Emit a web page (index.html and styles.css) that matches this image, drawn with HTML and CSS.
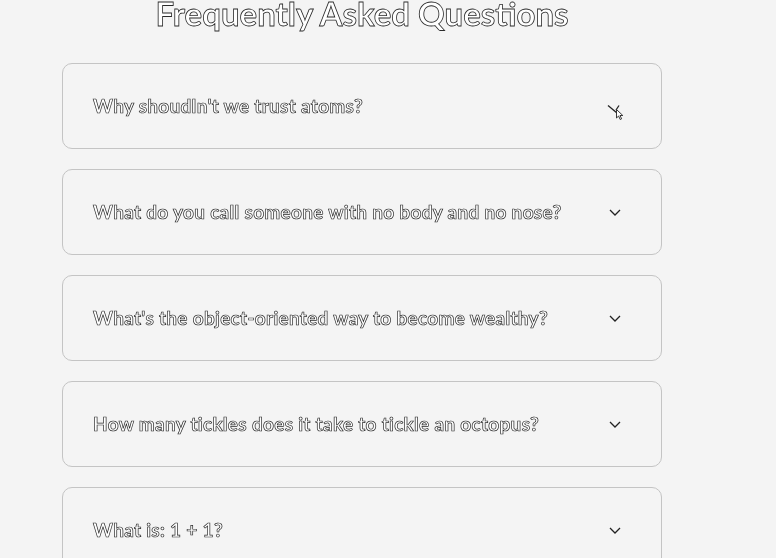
FILE: index.html
```html
<!DOCTYPE html>
<html lang="en">
<head>
<meta charset="utf-8">
<title>FAQ</title>
<link rel="stylesheet" href="styles.css">
</head>
<body>
<main class="faq">
  <h1 class="faq-title">Frequently Asked Questions</h1>
  <div class="faq-list">
    <div class="faq-item">
      <span class="faq-q">Why shoudln't we trust atoms?</span>
      <span class="faq-toggle">
        <svg width="30" height="30" viewBox="0 0 30 30">
          <path d="M8 14.5 L17 22" stroke="#222" stroke-width="1.3" fill="none"/>
          <path d="M16 19 L19 14.5" stroke="#222" stroke-width="1.3" fill="none"/>
          <path d="M16.5 18.5 L16.5 27 L18.6 25 L20.2 28.5 L21.6 27.8 L20 24.5 L22.8 24.5 Z" fill="#fff" stroke="#222" stroke-width="0.9"/>
        </svg>
      </span>
    </div>
    <div class="faq-item">
      <span class="faq-q">What do you call someone with no body and no nose?</span>
      <span class="faq-toggle"><svg width="30" height="30" viewBox="0 0 30 30"><path d="M10 13 L15 18 L20 13" stroke="#222" stroke-width="1.3" fill="none"/></svg></span>
    </div>
    <div class="faq-item">
      <span class="faq-q">What's the object-oriented way to become wealthy?</span>
      <span class="faq-toggle"><svg width="30" height="30" viewBox="0 0 30 30"><path d="M10 13 L15 18 L20 13" stroke="#222" stroke-width="1.3" fill="none"/></svg></span>
    </div>
    <div class="faq-item">
      <span class="faq-q">How many tickles does it take to tickle an octopus?</span>
      <span class="faq-toggle"><svg width="30" height="30" viewBox="0 0 30 30"><path d="M10 13 L15 18 L20 13" stroke="#222" stroke-width="1.3" fill="none"/></svg></span>
    </div>
    <div class="faq-item">
      <span class="faq-q">What is: 1 + 1?</span>
      <span class="faq-toggle"><svg width="30" height="30" viewBox="0 0 30 30"><path d="M10 13 L15 18 L20 13" stroke="#222" stroke-width="1.3" fill="none"/></svg></span>
    </div>
  </div>
</main>
</body>
</html>
```
FILE: styles.css
```css
html, body {
  margin: 0;
  padding: 0;
  background: #f4f4f4;
}
body {
  font-family: Lato, "Open Sans", sans-serif;
  overflow: hidden;
  height: 558px;
}
.faq {
  width: 600px;
  margin-left: 62px;
}
.faq-title {
  margin: -9px 0 0;
  font-size: 33px;
  font-weight: 700;
  line-height: 44px;
  text-align: center;
  color: #fff;
  -webkit-text-stroke: 0.8px #2a2a2a;
  letter-spacing: 0;
  will-change: transform;
}
.faq-list {
  display: flex;
  flex-direction: column;
  gap: 20px;
  margin-top: 28px;
}
.faq-item {
  box-sizing: border-box;
  height: 86px;
  border: 1px solid #c4c4c4;
  border-radius: 10px;
  padding: 0 30px;
  display: flex;
  align-items: center;
  justify-content: space-between;
}
.faq-q {
  font-size: 19px;
  font-weight: 700;
  color: #fff;
  -webkit-text-stroke: 0.7px #2a2a2a;
  letter-spacing: 0.3px;
  margin-top: -2px;
  will-change: transform;
}
.faq-toggle {
  width: 30px;
  height: 30px;
  margin-right: 1px;
  display: flex;
}
.faq-toggle svg {
  overflow: visible;
}
```
